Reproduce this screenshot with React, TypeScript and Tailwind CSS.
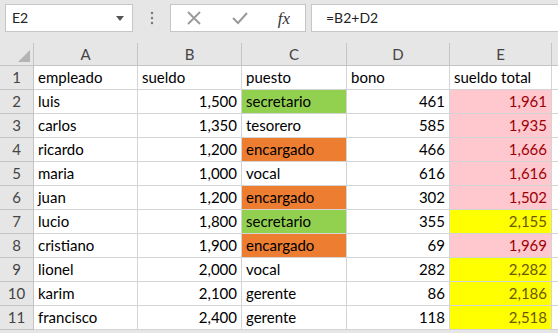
import React from "react";

type Fill = "green" | "orange" | "pink" | "yellow" | "";

const rows: { a: string; b: string; c: string; cf: Fill; d: string; e: string; ef: Fill }[] = [
  { a: "luis", b: "1,500", c: "secretario", cf: "green", d: "461", e: "1,961", ef: "pink" },
  { a: "carlos", b: "1,350", c: "tesorero", cf: "", d: "585", e: "1,935", ef: "pink" },
  { a: "ricardo", b: "1,200", c: "encargado", cf: "orange", d: "466", e: "1,666", ef: "pink" },
  { a: "maria", b: "1,000", c: "vocal", cf: "", d: "616", e: "1,616", ef: "pink" },
  { a: "juan", b: "1,200", c: "encargado", cf: "orange", d: "302", e: "1,502", ef: "pink" },
  { a: "lucio", b: "1,800", c: "secretario", cf: "green", d: "355", e: "2,155", ef: "yellow" },
  { a: "cristiano", b: "1,900", c: "encargado", cf: "orange", d: "69", e: "1,969", ef: "pink" },
  { a: "lionel", b: "2,000", c: "vocal", cf: "", d: "282", e: "2,282", ef: "yellow" },
  { a: "karim", b: "2,100", c: "gerente", cf: "", d: "86", e: "2,186", ef: "yellow" },
  { a: "francisco", b: "2,400", c: "gerente", cf: "", d: "118", e: "2,518", ef: "yellow" },
];

const fillCls: Record<Fill, string> = {
  green: "bg-[#92d050] text-black",
  orange: "bg-[#ed7d31] text-black",
  pink: "bg-[#ffc7ce] text-[#9c0006]",
  yellow: "bg-[#ffff00] text-[#6b5800]",
  "": "bg-white text-black",
};

const cell = "h-[24px] border-r border-b border-[#d4d4d4] px-[4px] flex items-center whitespace-nowrap overflow-hidden";
const rowHead = "h-[24px] border-r border-b border-[#c4c4c4] bg-[#e6e6e6] text-[#444] flex items-center justify-center";
const colHead = "h-[23px] border-r border-b border-[#c4c4c4] bg-[#e6e6e6] text-[#444] flex items-center justify-center";

export default function App() {
  return (
    <div className="w-[558px] h-[333px] overflow-hidden bg-[#e6e6e6] text-[15px] leading-none" style={{ fontFamily: "Lato, 'Noto Sans', sans-serif" }}>
      {/* formula bar */}
      <div className="h-[43px] flex items-start pt-[4px]">
        <div className="ml-[5px] w-[128px] h-[28px] bg-white border border-[#c6c6c6] flex items-center justify-between pl-[6px] pr-[8px]">
          <span className="text-[14px] text-[#222]">E2</span>
          <svg width="8" height="5" viewBox="0 0 8 5"><path d="M0 0h8L4 5z" fill="#555" /></svg>
        </div>
        <div className="w-[37px] h-[28px] flex items-center justify-center">
          <svg width="4" height="14" viewBox="0 0 4 14">
            <circle cx="2" cy="2" r="1.2" fill="#777" />
            <circle cx="2" cy="7" r="1.2" fill="#777" />
            <circle cx="2" cy="12" r="1.2" fill="#777" />
          </svg>
        </div>
        <div className="w-[136px] h-[28px] bg-white border border-[#c6c6c6] flex items-center">
          <div className="w-[46px] flex justify-center">
            <svg width="16" height="16" viewBox="0 0 16 16"><path d="M2 2l12 12M14 2L2 14" stroke="#9a9a9a" strokeWidth="1.8" /></svg>
          </div>
          <div className="w-[46px] flex justify-center">
            <svg width="18" height="16" viewBox="0 0 18 16"><path d="M2 8l5 5L16 3" stroke="#9a9a9a" strokeWidth="2" fill="none" /></svg>
          </div>
          <div className="w-[42px] flex justify-center">
            <span className="text-[17px] italic text-[#333]" style={{ fontFamily: "'Liberation Serif', serif" }}>fx</span>
          </div>
        </div>
        <div className="w-[5px] h-[28px]" />
        <div className="flex-1 h-[28px] bg-white border border-[#c6c6c6] border-r-0 flex items-center pl-[14px]">
          <span className="text-[14px] text-[#222]">=B2+D2</span>
        </div>
      </div>

      {/* sheet grid */}
      <div className="grid grid-cols-[34px_104px_104px_105px_103px_102px_1fr] bg-white">
        <div className={colHead + " relative"}>
          <svg className="absolute right-[3px] bottom-[3px]" width="12" height="12" viewBox="0 0 12 12"><path d="M12 0V12H0z" fill="#b4b4b4" /></svg>
        </div>
        {["A", "B", "C", "D", "E", ""].map((h, i) => (
          <div key={i} className={colHead}>{h}</div>
        ))}

        <div className={rowHead}>1</div>
        {["empleado", "sueldo", "puesto", "bono", "sueldo total"].map((h) => (
          <div key={h} className={cell}>{h}</div>
        ))}
        <div className={cell} />

        {rows.map((r, i) => (
          <React.Fragment key={r.a}>
            <div className={rowHead}>{i + 2}</div>
            <div className={cell}>{r.a}</div>
            <div className={cell + " justify-end"}>{r.b}</div>
            <div className={cell + " " + fillCls[r.cf]}>{r.c}</div>
            <div className={cell + " justify-end"}>{r.d}</div>
            <div className={cell + " justify-end " + fillCls[r.ef]}>{r.e}</div>
            <div className={cell} />
          </React.Fragment>
        ))}
      </div>
    </div>
  );
}
